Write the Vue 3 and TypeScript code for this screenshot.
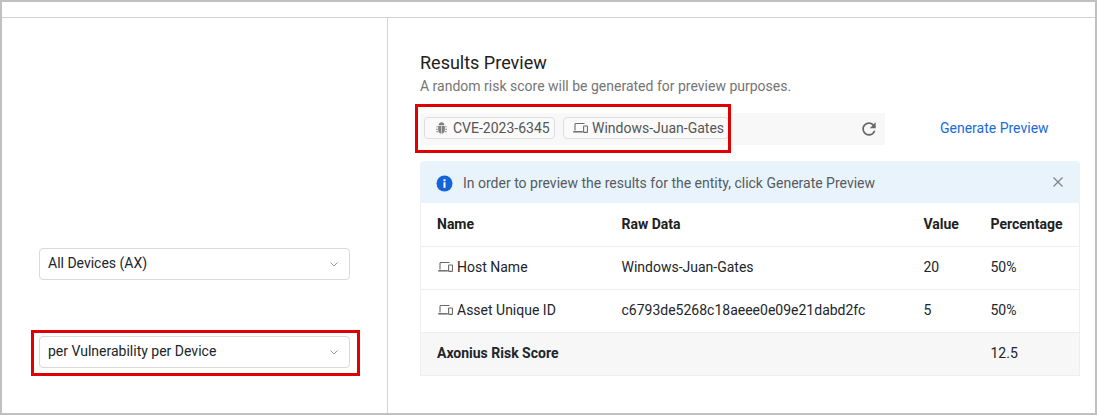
<script setup lang="ts">
interface Row { name: string; raw: string; value: string; pct: string }
const rows: Row[] = [
  { name: 'Host Name', raw: 'Windows-Juan-Gates', value: '20', pct: '50%' },
  { name: 'Asset Unique ID', raw: 'c6793de5268c18aeee0e09e21dabd2fc', value: '5', pct: '50%' },
]
</script>

<template>
  <div class="frame">
    <div class="topbar"></div>
    <div class="body">
      <aside class="left">
        <div class="select first">
          <span>All Devices (AX)</span>
          <svg class="chev" width="8" height="5" viewBox="0 0 8 5"><path d="M.5.5L4 4 7.5.5" fill="none" stroke="#999" stroke-width="1"/></svg>
        </div>
        <div class="select second">
          <span>per Vulnerability per Device</span>
          <svg class="chev" width="8" height="5" viewBox="0 0 8 5"><path d="M.5.5L4 4 7.5.5" fill="none" stroke="#999" stroke-width="1"/></svg>
          <div class="mark mark-select"></div>
        </div>
      </aside>
      <main class="right">
        <h2 class="title">Results Preview</h2>
        <p class="sub">A random risk score will be generated for preview purposes.</p>
        <div class="bar-row">
          <div class="bar">
            <span class="chip chip-a">
              <svg width="11" height="12" viewBox="0 0 11 12" fill="#7f7f7f">
                <path d="M2.6 3.2C2.7 1.4 3.9.3 5.5.3s2.8 1.1 2.9 2.9z"/>
                <path d="M2.2 3.9h3v7.8C3.4 11.5 2.2 10.1 2.2 8.3zM5.8 3.9h3v4.4c0 1.8-1.2 3.2-3 3.4z"/>
                <path d="M.4 4.3h1.3v1H.4zM9.3 4.3h1.3v1H9.3zM0 6.7h1.7v1H0zM9.3 6.7H11v1H9.3zM.4 9.2h1.7v1H.4zM8.9 9.2h1.7v1H8.9z"/>
              </svg>
              CVE-2023-6345
            </span>
            <span class="chip chip-b">
              <svg class="dev" width="15" height="10" viewBox="0 0 15 10" fill="none" stroke="#6b6b6b" stroke-width="1.1">
                <path d="M2 7.5V1.3c0-.4.3-.8.8-.8h8.7"/>
                <path d="M.2 8.8h9.6" stroke-width="1.5"/>
                <rect x="10.6" y="3" width="3.9" height="6.4" rx=".5"/>
              </svg>
              Windows-Juan-Gates
            </span>
            <svg class="refresh" width="20" height="20" viewBox="0 0 24 24" fill="#666">
              <path d="M17.65 6.35C16.2 4.9 14.21 4 12 4c-4.42 0-7.99 3.58-7.99 8s3.57 8 7.99 8c3.73 0 6.84-2.55 7.73-6h-2.08c-.82 2.33-3.04 4-5.65 4-3.31 0-6-2.69-6-6s2.69-6 6-6c1.66 0 3.14.69 4.22 1.78L13 11h7V4l-2.35 2.35z"/>
            </svg>
            <div class="mark mark-chips"></div>
          </div>
          <span class="gen">Generate Preview</span>
        </div>
        <div class="alert">
          <svg class="info" width="17" height="17" viewBox="0 0 17 17">
            <circle cx="8.5" cy="8.5" r="8" fill="#1565d8"/>
            <rect x="7.5" y="7.2" width="2" height="5.6" fill="#fff"/>
            <rect x="7.5" y="4.2" width="2" height="2" fill="#fff"/>
          </svg>
          <span class="alert-text">In order to preview the results for the entity, click Generate Preview</span>
          <svg class="close" width="10" height="10" viewBox="0 0 10 10"><path d="M.5.5l9 9M9.5.5l-9 9" stroke="#7d8287" stroke-width="1.2"/></svg>
        </div>
        <table class="tbl">
          <thead>
            <tr><th class="c1">Name</th><th class="c2">Raw Data</th><th class="c3">Value</th><th class="c4">Percentage</th></tr>
          </thead>
          <tbody>
            <tr v-for="r in rows" :key="r.name">
              <td>
                <span class="namecell">
                  <svg width="15" height="10" viewBox="0 0 15 10" fill="none" stroke="#6b6b6b" stroke-width="1.1">
                    <path d="M2 7.5V1.3c0-.4.3-.8.8-.8h8.7"/>
                    <path d="M.2 8.8h9.6" stroke-width="1.5"/>
                    <rect x="10.6" y="3" width="3.9" height="6.4" rx=".5"/>
                  </svg>
                  {{ r.name }}
                </span>
              </td>
              <td>{{ r.raw }}</td>
              <td>{{ r.value }}</td>
              <td>{{ r.pct }}</td>
            </tr>
            <tr class="total">
              <td class="strong">Axonius Risk Score</td><td></td><td></td><td>12.5</td>
            </tr>
          </tbody>
        </table>
      </main>
    </div>
  </div>
</template>

<style scoped>
.frame {
  box-sizing: border-box;
  width: 1097px;
  height: 415px;
  border: 2px solid #c0c0c0;
  background: #fff;
  display: flex;
  flex-direction: column;
  font-family: Roboto, "Liberation Sans", sans-serif;
  font-size: 14px;
  color: #212529;
  overflow: hidden;
}
.topbar { height: 15px; border-bottom: 1px solid #d0d0d6; flex: none; }
.body { flex: 1; display: flex; min-height: 0; }
.left {
  box-sizing: border-box;
  width: 386px;
  border-right: 1px solid #d4d4d8;
  padding: 230px 37px 0;
  flex: none;
}
.select {
  box-sizing: border-box;
  position: relative;
  width: 311px;
  height: 32px;
  border: 1px solid #d9d9d9;
  border-radius: 4px;
  display: flex;
  align-items: center;
  justify-content: space-between;
  padding: 0 11px 3px 8px;
}
.chev { margin-top: 4px; }
.second { margin-top: 56px; }
.mark { position: absolute; border: 3px solid #e00000; box-sizing: border-box; }
.mark-select { left: -9px; top: -7px; width: 329px; height: 46px; }
.right { flex: 1; padding: 33px 15px 0 32px; min-width: 0; }
.title { margin: 0; font-size: 18px; font-weight: 400; line-height: 24px; color: #212121; }
.sub { margin: 1px 0 0; font-size: 14px; line-height: 20px; color: #757575; }
.bar-row { display: flex; align-items: center; margin-top: 17px; }
.bar {
  position: relative;
  width: 465px;
  height: 32px;
  background: #f8f8f8;
  box-sizing: border-box;
  padding: 0 0 2px 4px;
  display: flex;
  align-items: center;
  gap: 8px;
}
.chip {
  box-sizing: border-box;
  height: 22px;
  border: 1px solid #dedede;
  border-radius: 4px;
  background: #fafafa;
  display: inline-flex;
  align-items: center;
  color: #555;
}
.chip-a { width: 131px; padding-left: 11px; gap: 6px; }
.chip-b { width: 166px; padding-left: 9px; gap: 4px; }
.dev { flex: none; }
.refresh { margin-left: auto; margin-right: 6px; margin-top: 2px; }
.mark-chips { left: -5px; top: -9px; width: 316px; height: 49px; }
.gen { margin-left: 55px; color: #1a6ad9; margin-bottom: 2px; }
.alert {
  box-sizing: border-box;
  margin-top: 16px;
  height: 42px;
  background: #e9f3fc;
  border-radius: 4px 4px 0 0;
  display: flex;
  align-items: center;
  padding: 1px 17px 0 16px;
  color: #555b61;
}
.info { margin-top: 2px; }
.alert-text { margin-left: 10px; }
.close { margin-left: auto; margin-top: -2px; }
.tbl {
  width: 660px;
  border-collapse: collapse;
  table-layout: fixed;
  border: 1px solid #eceef1;
  border-top: 0;
}
.tbl th, .tbl td {
  padding: 0 0 0 17px;
  height: 43px;
  text-align: left;
  border-bottom: 1px solid #eceef1;
  box-sizing: border-box;
  font-size: 14px;
}
.tbl td { padding-bottom: 2px; }
.tbl th:first-child, .tbl td:first-child { padding-left: 16px; }
.tbl th { font-weight: 700; color: #212121; }
.c1 { width: 184px; }
.c2 { width: 302px; }
.c3 { width: 67px; }
.namecell { display: inline-flex; align-items: center; gap: 4px; }
.namecell svg { margin-left: 1px; }
.total td { background: #f7f7f7; }
.strong { font-weight: 700; white-space: nowrap; }
</style>

<style>
html, body { margin: 0; background: #fff; }
</style>
